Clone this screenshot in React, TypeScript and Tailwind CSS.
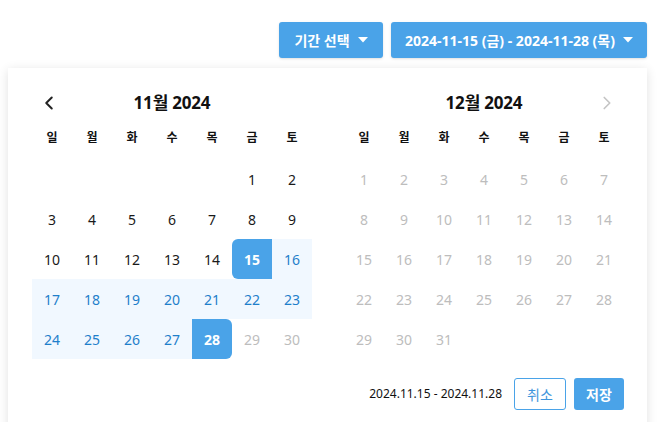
import { ChevronLeft, ChevronRight } from 'lucide-react';

type Day = { n: number | null; kind: 'normal' | 'start' | 'end' | 'range' | 'disabled' };

const WEEK = ['일', '월', '화', '수', '목', '금', '토'];

function novDays(): Day[] {
    const days: Day[] = [];
    for (let i = 0; i < 5; i++) days.push({ n: null, kind: 'normal' });
    for (let d = 1; d <= 30; d++) {
        let kind: Day['kind'] = 'normal';
        if (d === 15) kind = 'start';
        else if (d === 28) kind = 'end';
        else if (d > 15 && d < 28) kind = 'range';
        else if (d > 28) kind = 'disabled';
        days.push({ n: d, kind });
    }
    return days;
}

function decDays(): Day[] {
    const days: Day[] = [];
    for (let d = 1; d <= 31; d++) days.push({ n: d, kind: 'disabled' });
    return days;
}

function Caret() {
    return (
        <svg width="10" height="6" viewBox="0 0 10 6" className="ml-2">
            <path d="M0 0 L10 0 L5 5.5 Z" fill="white" />
        </svg>
    );
}

function Cell({ day }: { day: Day }) {
    if (day.n === null) return <div className="h-10" />;
    const base = 'h-10 flex items-center justify-center text-[14px]';
    if (day.kind === 'start')
        return <div className={`${base} bg-[#4aa3e8] text-white font-bold rounded-l-md`}>{day.n}</div>;
    if (day.kind === 'end')
        return <div className={`${base} bg-[#4aa3e8] text-white font-bold rounded-r-md`}>{day.n}</div>;
    if (day.kind === 'range')
        return <div className={`${base} bg-[#f1f8ff] text-[#1f7fcb]`}>{day.n}</div>;
    if (day.kind === 'disabled') return <div className={`${base} text-[#bdbdbd]`}>{day.n}</div>;
    return <div className={`${base} text-[#1a1a1a]`}>{day.n}</div>;
}

function Month({ title, days, prev, next }: { title: string; days: Day[]; prev?: boolean; next?: boolean }) {
    return (
        <div className="w-[280px]">
            <div className="relative h-6 flex items-center justify-center">
                {prev && (
                    <ChevronLeft className="absolute left-[6px] top-[1px] text-[#222]" size={22} strokeWidth={2.2} />
                )}
                <span className="text-[17px] font-bold text-[#111] tracking-[-0.2px]">{title}</span>
                {next && (
                    <ChevronRight className="absolute right-[6px] top-[1px] text-[#c4c4c4]" size={22} strokeWidth={1.8} />
                )}
            </div>
            <div className="grid grid-cols-7 mt-[15px] mb-[13px]">
                {WEEK.map((w) => (
                    <div key={w} className="h-4 flex items-center justify-center text-[12px] font-bold text-[#111]">
                        {w}
                    </div>
                ))}
            </div>
            <div className="grid grid-cols-7">
                {days.map((d, i) => (
                    <Cell key={i} day={d} />
                ))}
            </div>
        </div>
    );
}

export default function App() {
    return (
        <div
            className="w-[658px] h-[422px] overflow-hidden bg-white"
            style={{ fontFamily: '"Noto Sans", "Noto Sans CJK KR", sans-serif' }}
        >
            <div className="flex justify-end gap-2 pt-[22px] pr-[11px]">
                <button className="h-9 w-[104px] flex items-center justify-center rounded-[3px] bg-[#4aa3e8] text-white text-[14px] font-bold shadow-sm">
                    기간 선택
                    <Caret />
                </button>
                <button className="h-9 w-[256px] flex items-center justify-center rounded-[3px] bg-[#4aa3e8] text-white text-[14px] font-bold shadow-sm">
                    2024-11-15 (금) - 2024-11-28 (목)
                    <Caret />
                </button>
            </div>
            <div className="ml-2 mt-[10px] w-[639px] bg-white shadow-[0_2px_10px_rgba(0,0,0,0.12)] pt-[23px] pl-6 pr-[23px] pb-6">
                <div className="flex gap-8">
                    <Month title="11월 2024" days={novDays()} prev />
                    <Month title="12월 2024" days={decDays()} next />
                </div>
                <div className="flex items-center justify-end mt-[19px]">
                    <span className="text-[12px] text-[#111] mr-3">2024.11.15 - 2024.11.28</span>
                    <button className="h-8 w-[52px] rounded-[3px] border border-[#4aa3e8] text-[#3d95dc] text-[14px] bg-white">
                        취소
                    </button>
                    <button className="h-8 w-[50px] ml-2 rounded-[3px] bg-[#4aa3e8] text-white text-[14px] font-bold">
                        저장
                    </button>
                </div>
            </div>
        </div>
    );
}
